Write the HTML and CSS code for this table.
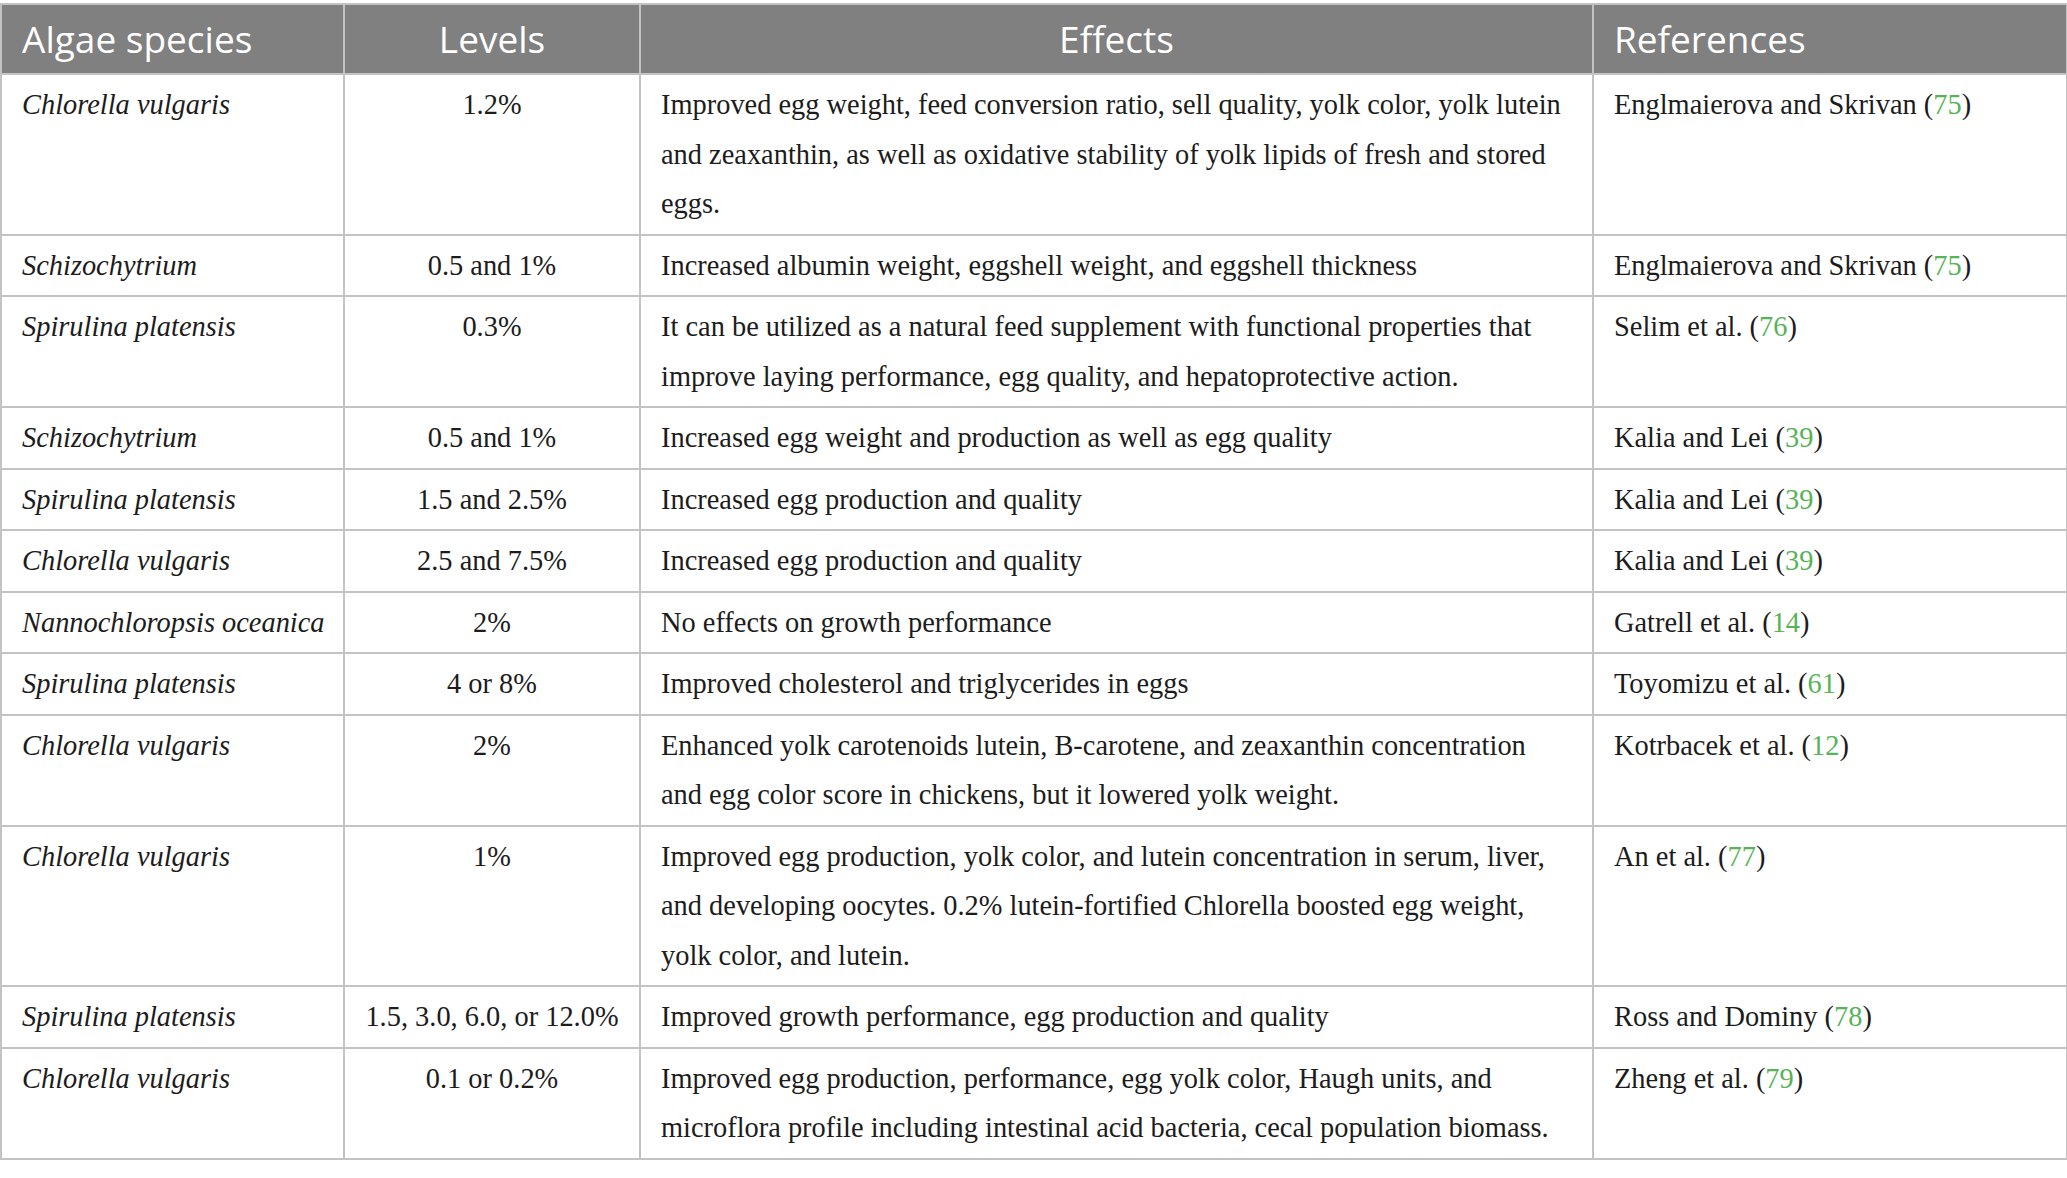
FILE: index.html
```html
<!DOCTYPE html>
<html lang="en">
<head>
<meta charset="utf-8">
<title>Algae species in laying hens</title>
<link rel="stylesheet" href="styles.css">
</head>
<body>
<div class="wrap">
<table class="data">
  <colgroup>
    <col class="c1"><col class="c2"><col class="c3"><col class="c4">
  </colgroup>
  <thead>
    <tr>
      <th class="left">Algae species</th>
      <th class="center">Levels</th>
      <th class="center">Effects</th>
      <th class="left">References</th>
    </tr>
  </thead>
  <tbody>
    <tr>
      <td class="sp">Chlorella vulgaris</td>
      <td class="lv">1.2%</td>
      <td class="fx">Improved egg weight, feed conversion ratio, sell quality, yolk color, yolk lutein and zeaxanthin, as well as oxidative stability of yolk lipids of fresh and stored eggs.</td>
      <td>Englmaierova and Skrivan (<a class="ref">75</a>)</td>
    </tr>
    <tr>
      <td class="sp">Schizochytrium</td>
      <td class="lv">0.5 and 1%</td>
      <td class="fx">Increased albumin weight, eggshell weight, and eggshell thickness</td>
      <td>Englmaierova and Skrivan (<a class="ref">75</a>)</td>
    </tr>
    <tr>
      <td class="sp">Spirulina platensis</td>
      <td class="lv">0.3%</td>
      <td class="fx">It can be utilized as a natural feed supplement with functional properties that improve laying performance, egg quality, and hepatoprotective action.</td>
      <td>Selim et al. (<a class="ref">76</a>)</td>
    </tr>
    <tr>
      <td class="sp">Schizochytrium</td>
      <td class="lv">0.5 and 1%</td>
      <td class="fx">Increased egg weight and production as well as egg quality</td>
      <td>Kalia and Lei (<a class="ref">39</a>)</td>
    </tr>
    <tr>
      <td class="sp">Spirulina platensis</td>
      <td class="lv">1.5 and 2.5%</td>
      <td class="fx">Increased egg production and quality</td>
      <td>Kalia and Lei (<a class="ref">39</a>)</td>
    </tr>
    <tr>
      <td class="sp">Chlorella vulgaris</td>
      <td class="lv">2.5 and 7.5%</td>
      <td class="fx">Increased egg production and quality</td>
      <td>Kalia and Lei (<a class="ref">39</a>)</td>
    </tr>
    <tr>
      <td class="sp">Nannochloropsis oceanica</td>
      <td class="lv">2%</td>
      <td class="fx">No effects on growth performance</td>
      <td>Gatrell et al. (<a class="ref">14</a>)</td>
    </tr>
    <tr>
      <td class="sp">Spirulina platensis</td>
      <td class="lv">4 or 8%</td>
      <td class="fx">Improved cholesterol and triglycerides in eggs</td>
      <td>Toyomizu et al. (<a class="ref">61</a>)</td>
    </tr>
    <tr>
      <td class="sp">Chlorella vulgaris</td>
      <td class="lv">2%</td>
      <td class="fx">Enhanced yolk carotenoids lutein, B-carotene, and zeaxanthin concentration and egg color score in chickens, but it lowered yolk weight.</td>
      <td>Kotrbacek et al. (<a class="ref">12</a>)</td>
    </tr>
    <tr>
      <td class="sp">Chlorella vulgaris</td>
      <td class="lv">1%</td>
      <td class="fx">Improved egg production, yolk color, and lutein concentration in serum, liver, and developing oocytes. 0.2% lutein-fortified Chlorella boosted egg weight, yolk color, and lutein.</td>
      <td>An et al. (<a class="ref">77</a>)</td>
    </tr>
    <tr>
      <td class="sp">Spirulina platensis</td>
      <td class="lv">1.5, 3.0, 6.0, or 12.0%</td>
      <td class="fx">Improved growth performance, egg production and quality</td>
      <td>Ross and Dominy (<a class="ref">78</a>)</td>
    </tr>
    <tr>
      <td class="sp">Chlorella vulgaris</td>
      <td class="lv">0.1 or 0.2%</td>
      <td class="fx">Improved egg production, performance, egg yolk color, Haugh units, and microflora profile including intestinal acid bacteria, cecal population biomass.</td>
      <td>Zheng et al. (<a class="ref">79</a>)</td>
    </tr>
  </tbody>
</table>
</div>
</body>
</html>
```

FILE: styles.css
```css
html, body {
  margin: 0;
  padding: 0;
  background: #ffffff;
}

.wrap {
  padding-top: 3px;
}

.data {
  width: 2066px;
  border-collapse: collapse;
  table-layout: fixed;
  font-family: "Liberation Serif", "Times New Roman", serif;
  font-size: 28.4px;
  color: #1c1c1c;
}

.c1 { width: 343px; }
.c2 { width: 296px; }
.c3 { width: 953px; }
.c4 { width: 474px; }

.data th,
.data td {
  border: 2px solid #c3c3c3;
  vertical-align: top;
}

.data th {
  background: #7f807f;
  color: #ffffff;
  font-family: "Open Sans", "Noto Sans", sans-serif;
  font-weight: 400;
  font-size: 37px;
  line-height: 50px;
  padding: 9px 20px 9px 20px;
}

.data th.left { text-align: left; }
.data th.center { text-align: center; }

.data td {
  line-height: 49.5px;
  padding: 5px 10px 5px 20px;
  text-align: left;
}

.data td.sp {
  font-style: italic;
}

.data td.fx {
  padding-right: 24px;
}

.data td.lv {
  text-align: center;
  padding-left: 10px;
  padding-right: 10px;
}

.ref {
  color: #57b357;
  text-decoration: none;
}
```
